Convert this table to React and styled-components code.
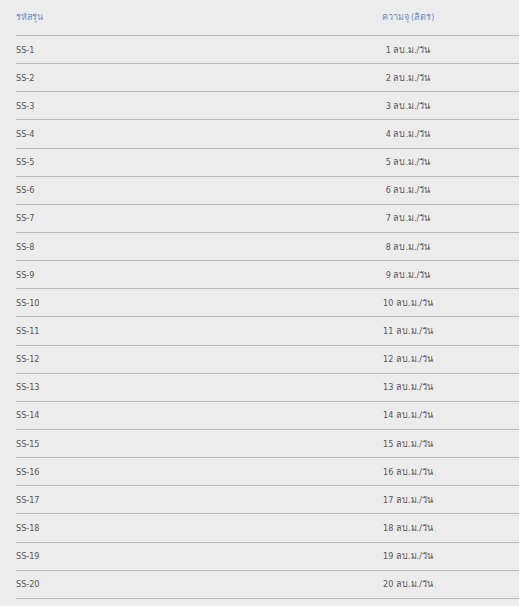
import React from "react";
import styled, { createGlobalStyle } from "styled-components";

const GlobalStyle = createGlobalStyle`
  html, body {
    margin: 0;
    padding: 0;
    background: #ececec;
  }
  body {
    font-family: Tahoma, "DejaVu Sans Condensed", "DejaVu Sans", sans-serif;
  }
`;

const Page = styled.div`
  width: 519px;
  height: 606px;
  overflow: hidden;
  background: #ececec;
  padding-left: 16px;
  box-sizing: border-box;
`;

const Table = styled.div`
  display: flex;
  flex-direction: column;
  width: 560px;
`;

const Row = styled.div`
  display: grid;
  grid-template-columns: 281px 222px;
  align-items: center;
  height: ${(p) => (p.$head ? "33px" : "27.15px")};
  border-bottom: 1px solid #b8b8b8;
  padding-bottom: ${(p) => (p.$head ? "2px" : "0")};
  box-sizing: content-box;
`;

const Cell = styled.div`
  font-size: 9px;
  color: ${(p) => (p.$head ? "#6b8cc2" : "#555")};
  text-align: ${(p) => (p.$center ? "center" : "left")};
  white-space: nowrap;
`;

const rows = Array.from({ length: 20 }, (_, i) => i + 1);

export default function App() {
  return (
    <>
      <GlobalStyle />
      <Page>
        <Table>
          <Row $head>
            <Cell $head>รหัสรุ่น</Cell>
            <Cell $head $center>ความจุ (ลิตร)</Cell>
          </Row>
          {rows.map((n) => (
            <Row key={n}>
              <Cell>SS-{n}</Cell>
              <Cell $center>{n} ลบ.ม./วัน</Cell>
            </Row>
          ))}
        </Table>
      </Page>
    </>
  );
}
